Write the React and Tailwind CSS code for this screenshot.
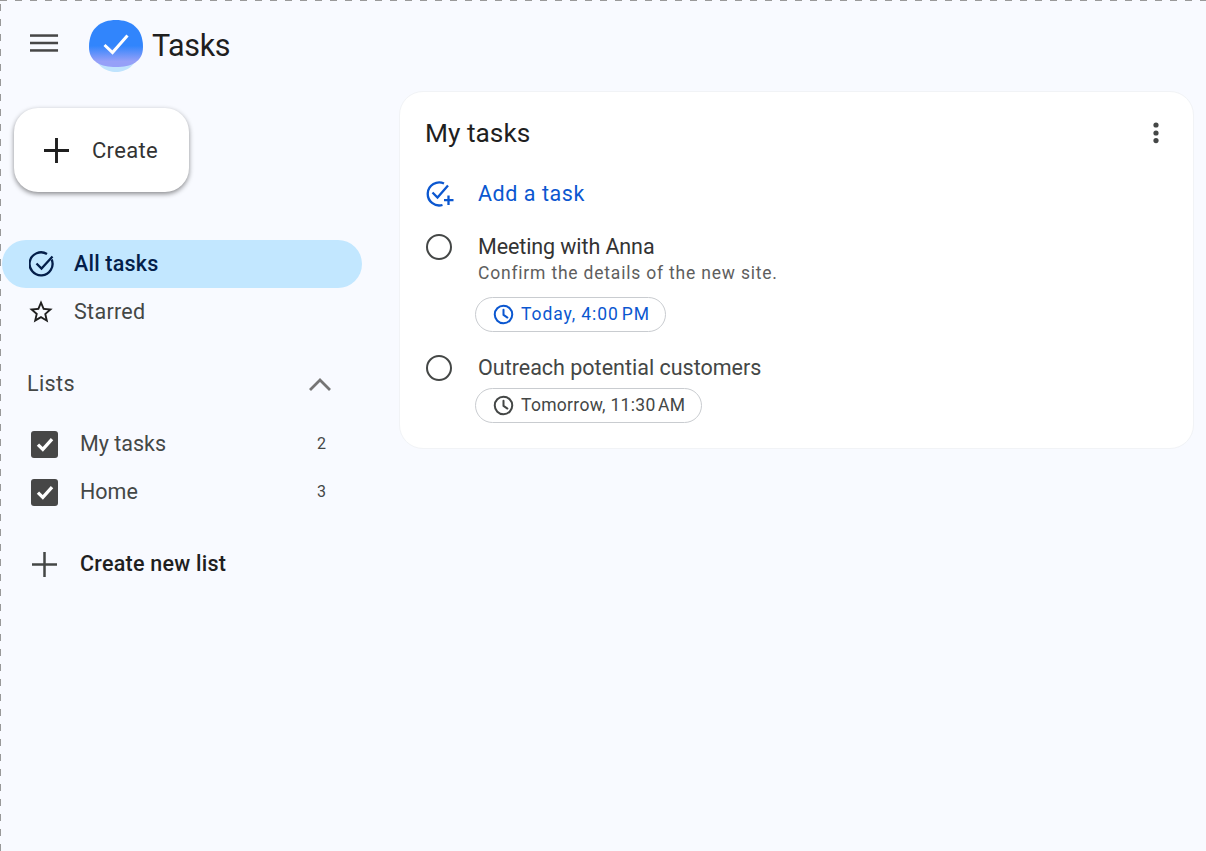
const PlusIcon = ({ className, weight }) => (
  <svg viewBox="0 0 24 24" className={className} fill="none" stroke="currentColor" strokeWidth={weight}>
    <path d="M12 0V24M0 12H24" />
  </svg>
);

const Clock = ({ className }) => (
  <svg viewBox="0 0 24 24" className={className} fill="none" stroke="currentColor" strokeWidth="2.3">
    <circle cx="12" cy="12" r="10" />
    <path d="M12 6.5V12.5L16.5 15.5" strokeLinecap="round" strokeLinejoin="round" />
  </svg>
);

const TasksLogo = () => (
  <svg viewBox="0 0 54 54" className="h-[54px] w-[54px]">
    <defs>
      <linearGradient id="logoFill" x1="0" y1="0" x2="0" y2="1">
        <stop offset="0.55" stopColor="#3185fc" />
        <stop offset="0.88" stopColor="#96a0f8" />
      </linearGradient>
    </defs>
    <path d="M4 30C6 46 17 52 27 52C37 52 48 46 50 30Z" fill="#bfe3fd" />
    <path d="M0 27C0 8 12 0 27 0C42 0 54 8 54 27C54 42 42 47 27 47C12 47 0 42 0 27Z" fill="url(#logoFill)" />
    <path d="M15.5 25L23.5 32.5L38.5 15.5" fill="none" stroke="#fff" strokeWidth="3" />
  </svg>
);

const ListCheck = () => (
  <span className="flex h-[27px] w-[27px] items-center justify-center rounded-[3px] bg-[#474747]">
    <svg viewBox="0 0 24 24" className="h-[26px] w-[26px]" fill="none" stroke="#fff" strokeWidth="3">
      <path d="M5.5 12.5L10 17L18.5 7.5" />
    </svg>
  </span>
);

const Chip = ({ label, blue, className }) => (
  <div
    className={`flex h-[35px] items-center gap-[7px] rounded-full border border-[#c9ccd0] bg-white pl-[17px] text-[17.5px] ${className} ${blue ? "text-[#0b57d0]" : "text-[#444746]"}`}
  >
    <Clock className="h-[21px] w-[21px] shrink-0" />
    <span>{label}</span>
  </div>
);

const App = () => {
  return (
    <div className="h-[851px] w-[1206px] overflow-hidden bg-[#f8faff] bg-[repeating-linear-gradient(90deg,#999_0_7px,transparent_7px_15px),repeating-linear-gradient(0deg,#999_0_7px,transparent_7px_15px)] bg-[length:100%_1px,1px_100%] bg-no-repeat pl-[1px] pt-[1px] font-['Roboto',sans-serif]">
      {/* Header */}
      <header className="flex h-[90px] items-start">
        <svg viewBox="0 0 30 20" className="ml-[29px] mt-[32px] h-[20px] w-[29px]" fill="#474747">
          <rect y="1" width="29" height="2.6" />
          <rect y="8.7" width="29" height="2.6" />
          <rect y="16.4" width="29" height="2.6" />
        </svg>
        <div className="ml-[30px] mt-[19px]">
          <TasksLogo />
        </div>
        <span className="ml-[9px] mt-[24px] text-[30.5px] leading-[42px] tracking-[-0.4px] text-[#1f1f1f]">Tasks</span>
      </header>

      <div className="flex">
        {/* Sidebar */}
        <aside className="w-[398px] shrink-0">
          <button className="ml-[13px] mt-[17px] flex h-[84px] w-[175px] items-center rounded-[24px] bg-white pl-[30px] text-[#1f1f1f] shadow-[0_2px_5px_rgba(0,0,0,0.45)]">
            <PlusIcon className="h-[25px] w-[25px]" weight={2.8} />
            <span className="ml-[23px] text-[22px] tracking-[0.3px] text-[#333]">Create</span>
          </button>

          <nav className="ml-[1px] mt-[48px] w-[360px]">
            <div className="flex h-[48px] items-center rounded-full bg-[#c2e7ff] pl-[27px] text-[#041e49]">
              <svg viewBox="0 0 26 26" className="h-[26px] w-[26px]" fill="none" stroke="currentColor" strokeWidth="2.3">
                <path d="M22.7 8.5A11.5 11.5 0 1 1 18 3" />
                <path d="M7.5 12.5L12.5 17.5L23.5 5.5" />
              </svg>
              <span className="ml-[19px] text-[21.5px] font-medium tracking-[0.2px]">All tasks</span>
            </div>
            <div className="flex h-[48px] items-center pl-[25px] text-[#444746]">
              <svg viewBox="0 0 24 24" className="h-[28px] w-[28px] text-[#1f1f1f]" fill="currentColor">
                <path d="M22 9.24l-7.19-.62L12 2 9.19 8.63 2 9.24l5.46 4.73L5.82 21 12 17.27 18.18 21l-1.63-7.03L22 9.24zM12 15.4l-3.76 2.27 1-4.28-3.32-2.88 4.38-.38L12 6.1l1.71 4.04 4.38.38-3.32 2.88 1 4.28L12 15.4z" />
              </svg>
              <span className="ml-[19px] text-[21.5px] tracking-[0.3px]">Starred</span>
            </div>
          </nav>

          <div className="ml-[26px] mt-[32px] flex w-[305px] items-center justify-between text-[#444746]">
            <span className="text-[21.5px] tracking-[0.4px]">Lists</span>
            <svg viewBox="0 0 24 14" className="h-[14px] w-[24px]" fill="none" stroke="#757575" strokeWidth="2.8">
              <path d="M2 13L12 3L22 13" />
            </svg>
          </div>

          <ul className="ml-[30px] mt-[20px] w-[295px]">
            {[
              { name: "My tasks", count: 2 },
              { name: "Home", count: 3 },
            ].map((list) => (
              <li key={list.name} className="flex h-[48px] items-center text-[#444746]">
                <ListCheck />
                <span className="ml-[22px] flex-1 text-[21.5px]">{list.name}</span>
                <span className="text-[16px]">{list.count}</span>
              </li>
            ))}
          </ul>

          <div className="ml-[31px] mt-[24px] flex h-[48px] items-center text-[#1f1f1f]">
            <PlusIcon className="h-[25px] w-[25px] text-[#444746]" weight={2.4} />
            <span className="ml-[23px] text-[21.5px] font-medium tracking-[0.25px]">Create new list</span>
          </div>
        </aside>

        {/* Task card */}
        <main className="h-[358px] w-[795px] rounded-[24px] border border-[#f1f3f6] bg-white pl-[25px]">
          <div className="mt-[21px] flex h-[40px] items-center justify-between pr-[34px]">
            <h1 className="pt-[2px] text-[26.3px] text-[#1f1f1f]">My tasks</h1>
            <svg viewBox="0 0 6 22" className="h-[22px] w-[6px]" fill="#444746">
              <circle cx="3" cy="3" r="2.6" />
              <circle cx="3" cy="11" r="2.6" />
              <circle cx="3" cy="18.6" r="2.6" />
            </svg>
          </div>

          <div className="mt-[20px] flex h-[40px] items-center text-[#0b57d0]">
            <svg viewBox="0 0 30 28" className="h-[28px] w-[30px]" fill="none" stroke="currentColor" strokeWidth="2.3">
              <path d="M17.5 26A11.5 11.5 0 1 1 19 4.5" />
              <path d="M7.5 13.5L12.5 18.5L23 6.5" />
              <path d="M23.5 16.5V26M19 21.2H28.5" />
            </svg>
            <span className="ml-[23px] pt-[2px] text-[21.5px] tracking-[0.55px]">Add a task</span>
          </div>

          <div className="mt-[20px] flex items-start">
            <span className="ml-[1px] mt-[1px] h-[26px] w-[26px] shrink-0 rounded-full border-[2.5px] border-[#444746]" />
            <div className="ml-[26px]">
              <div className="text-[21.5px] leading-[28px] tracking-[-0.1px] text-[#333]">Meeting with Anna</div>
              <div className="text-[17.5px] leading-[24px] tracking-[0.8px] text-[#5e5e5e]">Confirm the details of the new site.</div>
              <Chip label={"Today, 4:00\u202fPM"} blue className="-ml-[3px] mt-[12px] w-[191px] tracking-[0.9px]" />
            </div>
          </div>

          <div className="mt-[22px] flex items-start">
            <span className="ml-[1px] mt-[1px] h-[26px] w-[26px] shrink-0 rounded-full border-[2.5px] border-[#444746]" />
            <div className="ml-[26px]">
              <div className="text-[21.5px] leading-[28px] text-[#444746]">Outreach potential customers</div>
              <Chip label={"Tomorrow, 11:30\u202fAM"} className="-ml-[3px] mt-[6px] w-[227px] tracking-[0.3px]" />
            </div>
          </div>
        </main>
      </div>
    </div>
  );
};

export default App;
